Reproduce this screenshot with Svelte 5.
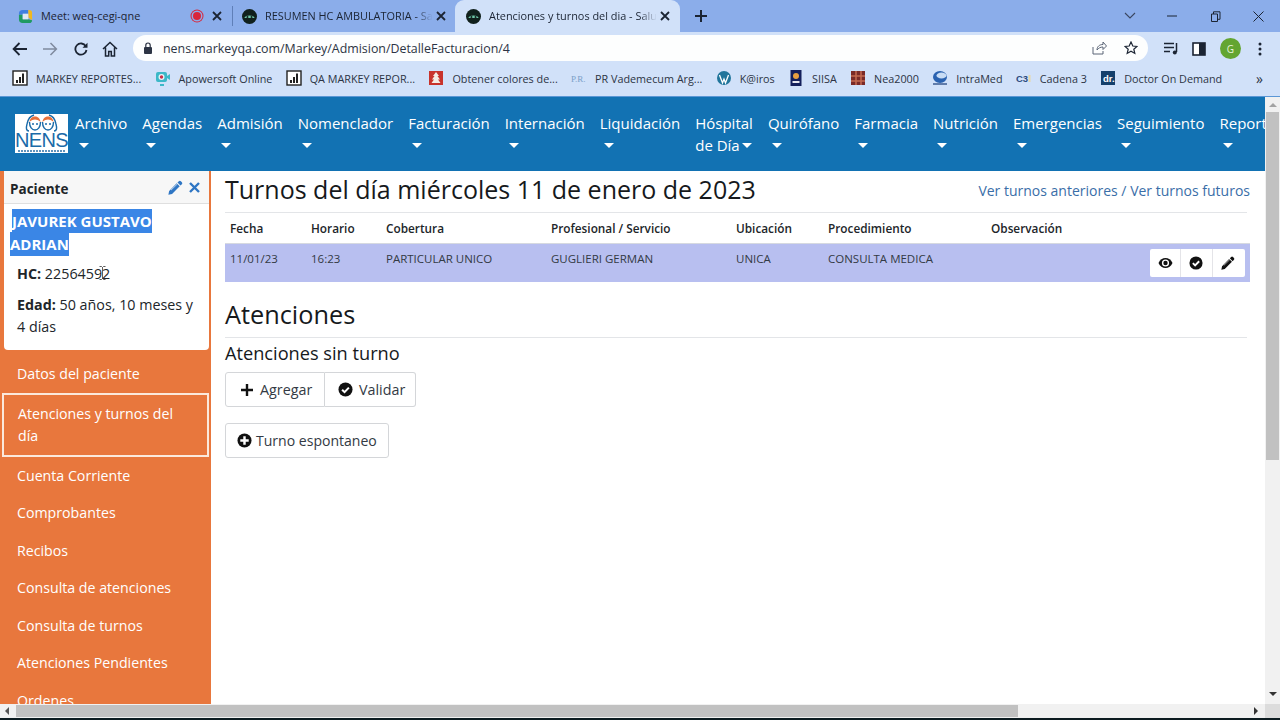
<script>
    const bookmarks = [
        { label: 'MARKEY REPORTES...', icon: 'chart' },
        { label: 'Apowersoft Online', icon: 'apower' },
        { label: 'QA MARKEY REPOR...', icon: 'chart' },
        { label: 'Obtener colores de...', icon: 'tree' },
        { label: 'PR Vademecum Arg...', icon: 'pr' },
        { label: 'K@iros', icon: 'wp' },
        { label: 'SIISA', icon: 'siisa' },
        { label: 'Nea2000', icon: 'nea' },
        { label: 'IntraMed', icon: 'intra' },
        { label: 'Cadena 3', icon: 'c3' },
        { label: 'Doctor On Demand', icon: 'dr' }
    ];

    const menu = ['Archivo', 'Agendas', 'Admisión', 'Nomenclador', 'Facturación', 'Internación', 'Liquidación'];
    const menuRight = ['Quirófano', 'Farmacia', 'Nutrición', 'Emergencias', 'Seguimiento', 'Reportes'];

    const sideLinks = ['Cuenta Corriente', 'Comprobantes', 'Recibos', 'Consulta de atenciones', 'Consulta de turnos', 'Atenciones Pendientes', 'Ordenes'];
</script>

{#snippet pencil(size, color)}
    <svg width={size} height={size} viewBox="0 0 16 16"><path fill={color} d="M11.600 1.200a1.500 1.500 0 0 1 2.100 0l1.100 1.100a1.500 1.500 0 0 1 0 2.100l-1.500 1.500-3.200-3.200zM9.300 3.500l3.200 3.200-8.200 8.200-3.900.9.800-4z"/><path d="M3.200 10.800l6.800-6.600" stroke="#fff" stroke-width=".7"/></svg>
{/snippet}

{#snippet checkCircle(size)}
    <svg width={size} height={size} viewBox="0 0 16 16"><circle cx="8" cy="8" r="7.500" fill="#111"/><path d="M4.400 8.200l2.600 2.600 4.600-4.800" fill="none" stroke="#fff" stroke-width="2.200"/></svg>
{/snippet}

{#snippet siteIcon()}
    <svg width="15" height="15" viewBox="0 0 16 16"><circle cx="8" cy="8" r="8" fill="#10201c"/><path d="M2.500 9.500c1-3.500 10-3.500 11 0z" fill="#6fc7a8"/><circle cx="5.800" cy="8.500" r="1.100" fill="#10201c"/><circle cx="10.200" cy="8.500" r="1.100" fill="#10201c"/></svg>
{/snippet}

{#snippet closeIcon()}
    <svg width="10" height="10" viewBox="0 0 10 10"><path d="M1 1l8 8M9 1l-8 8" stroke="#1b2433" stroke-width="1.800"/></svg>
{/snippet}

<div class="page">
    <div class="tabstrip">
        <div class="tab first">
            <svg width="15" height="15" viewBox="0 0 16 16"><path d="M5 1h6v5H1V5a4 4 0 0 1 4-4z" fill="#3f7fe0"/><path d="M11 1h1a3 3 0 0 1 3 3v8l-4-3z" fill="#f0b820"/><path d="M1 6h4v5h6l4 1a3 3 0 0 1-3 3H5a4 4 0 0 1-4-4z" fill="#1f9a62"/><rect x="5" y="5" width="6" height="6" fill="#dfe8f4"/></svg>
            <span class="tab-title plain">Meet: weq-cegi-qne</span>
            <span class="rec"></span>
            {@render closeIcon()}
        </div>
        <div class="tab-sep"></div>
        <div class="tab second">
            {@render siteIcon()}
            <span class="tab-title">RESUMEN HC AMBULATORIA - Salud</span>
            {@render closeIcon()}
        </div>
        <div class="tab active">
            {@render siteIcon()}
            <span class="tab-title">Atenciones y turnos del dia - Salud</span>
            {@render closeIcon()}
        </div>
        <svg class="newtab" width="12" height="12" viewBox="0 0 12 12"><path d="M6 0v12M0 6h12" stroke="#1b2433" stroke-width="2"/></svg>
        <div class="win">
            <svg width="12" height="8" viewBox="0 0 12 8"><path d="M1 1l5 5 5-5" fill="none" stroke="#3a4660" stroke-width="1.100"/></svg>
            <svg class="w-min" width="10" height="10" viewBox="0 0 10 10"><path d="M0 5h10" stroke="#1b2433" stroke-width="1"/></svg>
            <svg class="w-max" width="11" height="11" viewBox="0 0 11 11"><path d="M1.500 3h6v7.500h-6zM3.500 3V.8h6.500v7.500H7.500" fill="none" stroke="#1b2433" stroke-width="1"/></svg>
            <svg class="w-close" width="11" height="11" viewBox="0 0 11 11"><path d="M.5.500l10 10M10.500.500l-10 10" stroke="#1b2433" stroke-width="1"/></svg>
        </div>
    </div>

    <div class="toolbar">
        <svg class="t-back" width="16" height="14" viewBox="0 0 16 14"><path d="M15 7H2M7.500 1L1.600 7l5.900 6" fill="none" stroke="#1b2433" stroke-width="1.800"/></svg>
        <svg class="t-fwd" width="16" height="14" viewBox="0 0 16 14"><path d="M1 7h13M8.500 1l5.900 6-5.900 6" fill="none" stroke="#7f8a9e" stroke-width="1.500"/></svg>
        <svg class="t-reload" width="14" height="14" viewBox="0 0 14 14"><path d="M11.800 4.200A5.600 5.600 0 1 0 12.500 8" fill="none" stroke="#1b2433" stroke-width="1.800"/><path d="M13.500.8v5h-5z" fill="#1b2433"/></svg>
        <svg class="t-home" width="16" height="16" viewBox="0 0 16 16"><path d="M1 8l7-6.500L15 8M3.500 6.500V15h3.200v-4.500h2.600V15h3.200V6.500" fill="none" stroke="#1b2433" stroke-width="1.500"/></svg>
        <div class="address">
            <svg width="10" height="12" viewBox="0 0 10 12"><rect x="1" y="5" width="8" height="7" rx="1" fill="#2c3444"/><path d="M2.800 5V3.200a2.200 2.200 0 0 1 4.400 0V5" fill="none" stroke="#2c3444" stroke-width="1.200"/></svg>
            <span class="url">nens.markeyqa.com/Markey/Admision/DetalleFacturacion/4</span>
            <svg class="a-share" width="15" height="14" viewBox="0 0 15 14"><path d="M1 6v7h10v-3M5 9c0-3.500 2.500-5.500 6-5.500V1l3.500 4L11 8.500V6C8.500 6 6.500 7 5 9z" fill="none" stroke="#5a6476" stroke-width="1"/></svg>
            <svg class="a-star" width="14" height="14" viewBox="0 0 14 14"><path d="M7 1l1.800 4 4.200.400-3.200 2.800 1 4.200L7 10.200 3.200 12.400l1-4.200L1 5.400l4.200-.4z" fill="none" stroke="#1b2433" stroke-width="1.200"/></svg>
        </div>
        <svg class="t-queue" width="15" height="13" viewBox="0 0 15 13"><path d="M0 1.500h10M0 5.500h10M0 9.500h6" stroke="#1b2433" stroke-width="1.500"/><path d="M12.500 1v9" stroke="#1b2433" stroke-width="1.500"/><circle cx="10.800" cy="10.500" r="2" fill="#1b2433"/></svg>
        <svg class="t-side" width="14" height="14" viewBox="0 0 14 14"><rect x="1" y="1" width="12" height="12" fill="#fff" stroke="#1b2433" stroke-width="1.600"/><rect x="7" y="1" width="6" height="12" fill="#1b2433"/></svg>
        <span class="avatar">G</span>
        <svg class="t-dots" width="4" height="14" viewBox="0 0 4 14"><circle cx="2" cy="2" r="1.500" fill="#1b2433"/><circle cx="2" cy="7" r="1.500" fill="#1b2433"/><circle cx="2" cy="12" r="1.500" fill="#1b2433"/></svg>
    </div>

    <div class="bookmarks">
        {#each bookmarks as b}
            <span class="bm">
                <svg width="16" height="16" viewBox="0 0 16 16">
                    {#if b.icon === 'chart'}
                        <rect x="1" y="1" width="14" height="14" fill="#fff" stroke="#222" stroke-width="1.400"/><path d="M4 13v-3h2v3zM7 13V7h2v6zM10 13V3.500h2V13z" fill="#222"/>
                    {:else if b.icon === 'apower'}
                        <rect x="1" y="2" width="11" height="10" rx="2" fill="#3cb8c8"/><path d="M12 6l3-2v6l-3-2z" fill="#3cb8c8"/><circle cx="6.500" cy="7" r="3" fill="#e8f4f6"/><circle cx="6.500" cy="7" r="1.700" fill="#c8304a"/><path d="M5 15h4" stroke="#3cb8c8" stroke-width="2"/>
                    {:else if b.icon === 'tree'}
                        <rect x="1" y="1" width="14" height="14" fill="#c8332c"/><path d="M8 2l3 4H9.500l2.500 3.500H10l2.500 3.500h-9L6 9.500H4L6.500 6H5z" fill="#f4ece4"/>
                    {:else if b.icon === 'pr'}
                        <text x="0" y="12" font-size="9" fill="#7aa0c8" font-family="Liberation Serif">P.R.</text>
                    {:else if b.icon === 'wp'}
                        <circle cx="8" cy="8" r="7" fill="#21759b"/><path d="M3.500 5l3 8 1.500-4 1.500 4 3-8" fill="none" stroke="#fff" stroke-width="1.300"/>
                    {:else if b.icon === 'siisa'}
                        <rect x="2.500" y="0" width="11" height="16" fill="#14205c"/><circle cx="8" cy="6" r="3" fill="#e8a040"/><rect x="4.500" y="11" width="7" height="2" fill="#e8e8f0"/>
                    {:else if b.icon === 'nea'}
                        <rect x="1" y="1" width="14" height="14" fill="#7a2a28"/><path d="M1 6h14M1 11h14M6 1v14M11 1v14" stroke="#c46a50" stroke-width="1.500"/>
                    {:else if b.icon === 'intra'}
                        <ellipse cx="8" cy="7" rx="7" ry="6" fill="#2a62b0"/><ellipse cx="9.500" cy="5.500" rx="5" ry="3" fill="#c8dcf4"/><path d="M1 14h14" stroke="#3a5a90" stroke-width="1.500"/>
                    {:else if b.icon === 'c3'}
                        <text x="0" y="12" font-size="9.500" font-weight="700" fill="#2c4a80" font-family="Liberation Sans">C3</text><rect x="12.500" y="5" width="2" height="7" fill="#e8d8a8"/>
                    {:else}
                        <rect x="1" y="1" width="14" height="14" fill="#14406c"/><text x="3" y="12" font-size="9.500" font-weight="700" fill="#fff" font-family="Liberation Sans">dr.</text>
                    {/if}
                </svg>
                <span class="bm-label">{b.label}</span>
            </span>
        {/each}
        <span class="bm-more">»</span>
    </div>

    <div class="viewport">
        <div class="site">
            <nav class="navbar">
                <div class="logo">
                    <svg width="53" height="18" viewBox="0 0 53 18">
                        <path d="M14.500 8c0 5 2.500 8 5.500 8s5.500-3 5.500-8M27.500 8c0 5 2.500 8 5.500 8s5.500-3 5.500-8" fill="none" stroke="#1a6aa8" stroke-width="1.400"/>
                        <path d="M14 17c-3 0-3-3-2-7 1-5 3-8 7-9M39 17c3 0 3-3 2-7-1-5-3-8-7-9" fill="none" stroke="#1a6aa8" stroke-width="1.400"/>
                        <path d="M14.500 8c.5-4 3-5.500 5.500-5.500S25 4 25.500 8c-2-1.800-4-2.500-5.500-2.500S16.500 6.200 14.500 8zM27.500 8c.5-4 3-5.500 5.500-5.500S38 4 38.500 8c-2-1.800-4-2.500-5.500-2.500S29.500 6.200 27.500 8z" fill="#e8703a"/>
                        <circle cx="18" cy="10" r="1" fill="#1a6aa8"/><circle cx="22" cy="10" r="1" fill="#1a6aa8"/><circle cx="31" cy="10" r="1" fill="#1a6aa8"/><circle cx="35" cy="10" r="1" fill="#1a6aa8"/>
                    </svg>
                    <span class="logo-text">NENS</span>
                    <i class="logo-strip"></i>
                </div>
                <div class="menu">
                    {#each menu as item}
                        <span class="menu-item">{item}<i class="caret block"></i></span>
                    {/each}
                    <span class="menu-item">Hóspital<br>de Día<i class="caret"></i></span>
                    {#each menuRight as item}
                        <span class="menu-item">{item}<i class="caret block"></i></span>
                    {/each}
                </div>
            </nav>

            <div class="body">
                <aside class="sidebar">
                    <section class="card">
                        <header class="card-head">
                            <b>Paciente</b>
                            <span class="card-tools">
                                {@render pencil(15, '#2f76c4')}
                                <svg width="11" height="11" viewBox="0 0 11 11"><path d="M1 1l9 9M10 1l-9 9" stroke="#2f76c4" stroke-width="2.400"/></svg>
                            </span>
                        </header>
                        <p class="name"><span>JAVUREK GUSTAVO ADRIAN</span></p>
                        <p class="info"><b>HC:</b> 22564592<svg class="ibeam" width="7" height="14" viewBox="0 0 7 14"><path d="M.5.500h2l1 1 1-1h2M3.500 1.500v11M.5 13.500h2l1-1 1 1h2" fill="none" stroke="#333" stroke-width=".8"/></svg></p>
                        <p class="info"><b>Edad:</b> 50 años, 10 meses y 4 días</p>
                    </section>
                    <a class="side-link">Datos del paciente</a>
                    <a class="side-link current">Atenciones y turnos del día</a>
                    {#each sideLinks as link}
                        <a class="side-link">{link}</a>
                    {/each}
                </aside>

                <main class="content">
                    <div class="title-row">
                        <h2>Turnos del día miércoles 11 de enero de 2023</h2>
                        <span class="links">Ver turnos anteriores / Ver turnos futuros</span>
                    </div>
                    <table>
                        <thead>
                            <tr>
                                <th class="c-date">Fecha</th>
                                <th class="c-time">Horario</th>
                                <th class="c-cov">Cobertura</th>
                                <th class="c-prof">Profesional / Servicio</th>
                                <th class="c-loc">Ubicación</th>
                                <th class="c-proc">Procedimiento</th>
                                <th>Observación</th>
                                <th class="c-act"></th>
                            </tr>
                        </thead>
                        <tbody>
                            <tr>
                                <td>11/01/23</td>
                                <td>16:23</td>
                                <td>PARTICULAR UNICO</td>
                                <td>GUGLIERI GERMAN</td>
                                <td>UNICA</td>
                                <td>CONSULTA MEDICA</td>
                                <td></td>
                                <td class="c-act">
                                    <div class="row-actions">
                                        <span>
                                            <svg width="15" height="12" viewBox="0 0 15 12"><path d="M.5 6C2 2.800 4.500 1 7.500 1s5.500 1.800 7 5c-1.500 3.200-4 5-7 5s-5.500-1.800-7-5z" fill="#111"/><circle cx="7.500" cy="6" r="3.600" fill="#fff"/><circle cx="7.500" cy="6" r="2.200" fill="#111"/></svg>
                                        </span>
                                        <span>{@render checkCircle(14)}</span>
                                        <span>{@render pencil(14, '#111')}</span>
                                    </div>
                                </td>
                            </tr>
                        </tbody>
                    </table>

                    <h3>Atenciones</h3>
                    <h4>Atenciones sin turno</h4>
                    <div class="btn-group">
                        <button>
                            <svg width="14" height="14" viewBox="0 0 14 14"><path d="M7 1v12M1 7h12" stroke="#111" stroke-width="2.400"/></svg>
                            Agregar
                        </button>
                        <button>{@render checkCircle(15)} Validar</button>
                    </div>
                    <button class="solo">
                        <svg width="15" height="15" viewBox="0 0 16 16"><circle cx="8" cy="8" r="7.500" fill="#111"/><path d="M8 3.500v9M3.500 8h9" stroke="#fff" stroke-width="2.600"/></svg>
                        Turno espontaneo
                    </button>
                </main>
            </div>
        </div>

        <div class="vscroll">
            <i class="arrow up"></i>
            <div class="vthumb"></div>
            <i class="arrow down"></i>
        </div>
    </div>

    <div class="hscroll">
        <i class="arrow left"></i>
        <div class="hthumb"></div>
        <i class="arrow right"></i>
    </div>
    <div class="player-edge"></div>
</div>

<style>
    :global(body) {
        margin: 0;
        background: #fff;
    }

    .page {
        width: 1280px;
        height: 720px;
        overflow: hidden;
        display: flex;
        flex-direction: column;
        font-family: "Open Sans", sans-serif;
        color: #212529;
    }

    /* Browser chrome */
    .tabstrip {
        height: 32px;
        flex: none;
        display: flex;
        align-items: center;
        background: #8badea;
        font-size: 10.900px;
        color: #1b2433;
    }

    .tab {
        height: 32px;
        box-sizing: border-box;
        display: flex;
        align-items: center;
        flex: none;
    }

    .tab.first {
        width: 232px;
        padding: 0 10px 0 18px;
    }

    .tab-sep {
        width: 1px;
        height: 20px;
        background: #5f7fb8;
        flex: none;
    }

    .tab.second {
        width: 222px;
        padding: 0 9px;
    }

    .tab.active {
        width: 225px;
        padding: 0 10px 0 11px;
        background: #d1e1f9;
        border-radius: 9px 9px 0 0;
    }

    .tab-title {
        flex: 1;
        margin: 0 0 1px 8px;
        white-space: nowrap;
        overflow: hidden;
        -webkit-mask-image: linear-gradient(to right, #000 88%, transparent 98%);
        mask-image: linear-gradient(to right, #000 88%, transparent 98%);
    }

    .tab-title.plain {
        -webkit-mask-image: none;
        mask-image: none;
    }

    .rec {
        width: 8px;
        height: 8px;
        border-radius: 50%;
        background: #d9263a;
        box-shadow: 0 0 0 1.500px #8badea, 0 0 0 2.500px #d9263a;
        margin-right: 11px;
    }

    .newtab {
        margin-left: 15px;
    }

    .win {
        margin-left: auto;
        display: flex;
        align-items: center;
        padding-right: 16px;
    }

    .w-min {
        margin-left: 31px;
    }

    .w-max {
        margin-left: 33px;
    }

    .w-close {
        margin-left: 32px;
    }

    .toolbar {
        height: 33px;
        flex: none;
        display: flex;
        align-items: center;
        background: #d1e1f9;
        padding-left: 12px;
    }

    .t-fwd {
        margin-left: 14px;
    }

    .t-reload {
        margin-left: 16px;
    }

    .t-home {
        margin-left: 14px;
    }

    .address {
        width: 1015px;
        height: 26px;
        box-sizing: border-box;
        margin-left: 15px;
        margin-bottom: 1px;
        padding: 0 10px;
        border-radius: 13px;
        background: #fdfefe;
        display: flex;
        align-items: center;
        font-size: 12.400px;
        color: #2c3444;
    }

    .url {
        margin-left: 10px;
    }

    .a-share {
        margin-left: auto;
    }

    .a-star {
        margin-left: 17px;
    }

    .t-queue {
        margin-left: 16px;
    }

    .t-side {
        margin-left: 13px;
    }

    .avatar {
        margin-left: 14px;
        width: 21px;
        height: 21px;
        border-radius: 50%;
        background: #63a531;
        color: #e8f4dc;
        font-size: 10px;
        display: flex;
        align-items: center;
        justify-content: center;
    }

    .t-dots {
        margin-left: 17px;
    }

    .bookmarks {
        height: 31px;
        flex: none;
        box-sizing: border-box;
        display: flex;
        align-items: center;
        gap: 13.300px;
        padding: 0 12px 5px;
        background: #d1e1f9;
        font-size: 10.800px;
        color: #2c3444;
    }

    .bm {
        display: flex;
        align-items: center;
        gap: 8px;
        white-space: nowrap;
    }

    .bm-more {
        margin-left: auto;
        font-size: 14px;
        padding-right: 5px;
    }

    /* Page */
    .viewport {
        flex: 1;
        min-height: 0;
        display: flex;
        border-top: 1px solid #5b97d6;
    }

    .site {
        flex: 1;
        min-width: 0;
        display: flex;
        flex-direction: column;
        overflow: hidden;
    }

    .navbar {
        height: 74px;
        flex: none;
        box-sizing: border-box;
        display: flex;
        align-items: flex-start;
        padding: 15px 0 0 15px;
        background: #1272b3;
        color: #fff;
        overflow: hidden;
    }

    .logo {
        width: 53px;
        height: 39px;
        margin-top: 2px;
        flex: none;
        background: #fff;
        display: flex;
        flex-direction: column;
        align-items: center;
        color: #1a6aa8;
        overflow: hidden;
    }

    .logo-text {
        font-family: "Liberation Sans", sans-serif;
        font-size: 20px;
        line-height: 17px;
        letter-spacing: -.7px;
    }

    .logo-strip {
        display: block;
        width: 48px;
        height: 2px;
        margin-top: 1px;
        background: repeating-linear-gradient(to right, #5f93bd 0 2px, #fff 2px 3px);
    }

    .menu {
        display: flex;
        align-items: flex-start;
        gap: 15px;
        margin-left: 7px;
        font-size: 15px;
        line-height: 22px;
        white-space: nowrap;
    }

    .caret {
        display: inline-block;
        border-top: 5px solid #fff;
        border-left: 5px solid transparent;
        border-right: 5px solid transparent;
        margin-left: 2px;
        vertical-align: 3px;
    }

    .caret.block {
        display: block;
        width: 0;
        margin: 9px 0 0 4px;
    }

    .body {
        flex: 1;
        min-height: 0;
        display: flex;
    }

    .sidebar {
        width: 211px;
        flex: none;
        box-sizing: border-box;
        padding: 0 2px;
        background: #e8773d;
        color: #fff;
        font-size: 14.200px;
        line-height: 22.500px;
        overflow: hidden;
    }

    .card {
        margin: 0 0 5px 2px;
        background: #fff;
        color: #212529;
        border-radius: 0 0 4px 4px;
        height: 179px;
        box-sizing: border-box;
    }

    .card-head {
        height: 33px;
        box-sizing: border-box;
        display: flex;
        align-items: center;
        justify-content: space-between;
        padding: 4px 9px 0 6px;
        background: #f7f7f7;
        border-bottom: 1px solid #dfdfdf;
        font-size: 13.500px;
    }

    .card-tools {
        display: flex;
        align-items: center;
        gap: 6px;
        margin-top: -3px;
    }

    .name {
        margin: 6px 0 0;
        padding: 0 20px 0 6px;
        font-weight: 700;
        text-indent: 2px;
        font-size: 15px;
    }

    .name span {
        background: #3a86e6;
        color: #fff;
        padding: 2px 0;
    }

    .info {
        position: relative;
        margin: 8px 0 0;
        padding: 0 12px 0 13px;
        font-size: 14.300px;
    }

    .info + .info {
        margin-top: 8px;
    }

    .ibeam {
        position: absolute;
        left: 95px;
        top: 3px;
    }

    .side-link {
        display: block;
        padding: 7.500px 14px 7.500px 15px;
    }

    .side-link.current {
        border: 2px solid #fbe9dc;
        padding: 8px 14px 7.500px;
    }

    .content {
        flex: 1;
        min-width: 0;
        padding: 0 15px 0 14px;
        display: flex;
        flex-direction: column;
        align-items: flex-start;
    }

    .title-row {
        align-self: stretch;
        height: 42px;
        box-sizing: border-box;
        display: flex;
        align-items: center;
        justify-content: space-between;
        border-bottom: 1px solid #e3e5e8;
        margin: 0 3px 0 0;
        padding-bottom: 6px;
    }

    h2, h3, h4 {
        margin: 0;
        font-weight: 400;
        color: #16191c;
    }

    h2 {
        font-size: 25px;
        line-height: 32px;
    }

    .links {
        font-size: 14px;
        color: #3a6ea8;
        margin-right: -3px;
        margin-top: 3px;
    }

    table {
        align-self: stretch;
        border-collapse: collapse;
        table-layout: fixed;
        font-size: 11.500px;
        color: #333a44;
    }

    th {
        height: 30px;
        padding: 1px 0 0 5px;
        font-size: 11.800px;
        font-weight: 600;
        text-align: left;
        color: #212529;
        box-sizing: border-box;
    }

    td {
        height: 39px;
        padding: 0 0 8px 5px;
        box-sizing: border-box;
    }

    tbody tr {
        background: #b8bff0;
        border-top: 1px solid #d6d9e0;
    }

    .c-date {
        width: 81px;
    }

    .c-time {
        width: 75px;
    }

    .c-cov {
        width: 165px;
    }

    .c-prof {
        width: 185px;
    }

    .c-loc {
        width: 92px;
    }

    .c-proc {
        width: 163px;
    }

    .c-act {
        width: 100px;
        padding: 0 5px 0 0;
    }

    .row-actions {
        display: flex;
        height: 28px;
        width: 95px;
        box-sizing: border-box;
        padding-right: 2px;
        margin-left: auto;
        background: #fff;
        border-radius: 2px;
    }

    .row-actions span {
        flex: 1;
        display: flex;
        align-items: center;
        justify-content: center;
    }

    .row-actions span + span {
        border-left: 1px solid #e4e4e8;
    }

    h3 {
        align-self: stretch;
        margin: 9px 3px 0 0;
        font-size: 25.300px;
        line-height: 46px;
        border-bottom: 1px solid #e3e5e8;
    }

    h4 {
        margin-top: 2px;
        font-size: 18.200px;
        line-height: 26px;
    }

    .btn-group {
        display: flex;
        margin-top: 6px;
    }

    button {
        height: 35px;
        box-sizing: border-box;
        border: 1px solid #d4d6d9;
        background: #fff;
        border-radius: 3px;
        color: #333a44;
        font: 14.300px "Open Sans", sans-serif;
        display: flex;
        align-items: center;
        gap: 6px;
    }

    .btn-group button:first-child {
        width: 100px;
        padding-left: 14px;
        border-radius: 3px 0 0 3px;
    }

    .btn-group button:last-child {
        width: 91px;
        padding-left: 13px;
        border-left: none;
        border-radius: 0 3px 3px 0;
    }

    .solo {
        width: 164px;
        margin-top: 16px;
        padding: 0 0 0 11px;
        gap: 4px;
        font-size: 14.050px;
    }

    /* Scrollbars */
    .vscroll {
        width: 15px;
        flex: none;
        display: flex;
        flex-direction: column;
        align-items: center;
        background: #f1f1f1;
    }

    .vthumb {
        width: 13px;
        height: 348px;
        margin-top: 5px;
        background: #c1c1c1;
    }

    .arrow {
        width: 0;
        height: 0;
        display: block;
        flex: none;
    }

    .arrow.up {
        margin-top: 6px;
        border: 4px solid transparent;
        border-top: none;
        border-bottom: 4px solid #a3a3a3;
    }

    .arrow.down {
        margin-top: auto;
        margin-bottom: 8px;
        border: 4px solid transparent;
        border-bottom: none;
        border-top: 4px solid #333;
    }

    .hscroll {
        height: 14px;
        flex: none;
        display: flex;
        align-items: center;
        background: linear-gradient(to right, #f1f1f1 1265px, #dcdcdc 1265px);
    }

    .arrow.left {
        margin-left: 5px;
        border: 4px solid transparent;
        border-left: none;
        border-right: 4px solid #555;
    }

    .hthumb {
        width: 1002px;
        height: 12px;
        margin-left: 7px;
        background: #c1c1c1;
    }

    .arrow.right {
        margin-left: 236px;
        border: 4px solid transparent;
        border-right: none;
        border-left: 4px solid #333;
    }

    .player-edge {
        height: 2px;
        flex: none;
        background: #0c1b20;
    }
</style>
